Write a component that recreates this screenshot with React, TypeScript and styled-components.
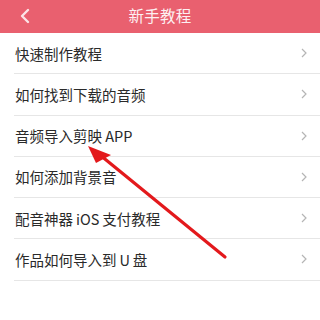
import React from "react";
import styled, { createGlobalStyle } from "styled-components";

const Global = createGlobalStyle`
  html, body { margin: 0; padding: 0; background: #ffffff; }
  body { font-family: "Noto Sans CJK SC", "Noto Sans", sans-serif; }
`;

const Page = styled.div`
  position: relative;
  width: 320px;
  height: 320px;
  overflow: hidden;
  background: #ffffff;
`;

const Header = styled.div`
  height: 33px;
  background: #e9606f;
  display: flex;
  align-items: center;
  justify-content: center;
  position: relative;
`;

const BackButton = styled.div`
  position: absolute;
  left: 18px;
  top: 8px;
  width: 14px;
  height: 16px;
  display: flex;
`;

const Title = styled.div`
  color: #fdf0f2;
  font-size: 15.5px;
  letter-spacing: 0.3px;
  line-height: 1;
  margin-top: -2px;
`;

const List = styled.div`
  display: flex;
  flex-direction: column;
`;

const Row = styled.div`
  height: 40.25px;
  margin-left: 14px;
  padding-right: 13px;
  border-bottom: 1px solid #e6e6e6;
  display: flex;
  align-items: center;
  justify-content: space-between;
`;

const Label = styled.span`
  font-size: 14.5px;
  color: #2a2a2a;
  padding-left: 1px;
  margin-top: 0px;
`;

const Chevron = styled.svg`
  width: 6px;
  height: 10px;
  flex: none;
`;

const ArrowLayer = styled.svg`
  position: absolute;
  left: 0;
  top: 0;
  width: 320px;
  height: 320px;
  pointer-events: none;
`;

const items = [
  "快速制作教程",
  "如何找到下载的音频",
  "音频导入剪映 APP",
  "如何添加背景音",
  "配音神器\u2009iOS\u2009支付教程",
  "作品如何导入到\u2009U\u2009盘",
];

export default function App() {
  return (
    <Page>
      <Global />
      <Header>
        <BackButton>
          <svg width="14" height="16" viewBox="0 0 14 16">
            <path d="M10 2 L4 8 L10 14" fill="none" stroke="#fbe4e7" strokeWidth="2.4" strokeLinecap="round" strokeLinejoin="round" />
          </svg>
        </BackButton>
        <Title>新手教程</Title>
      </Header>
      <List>
        {items.map((t) => (
          <Row key={t}>
            <Label>{t}</Label>
            <Chevron viewBox="0 0 6 10">
              <path d="M1 1 L5 5 L1 9" fill="none" stroke="#b5b5b5" strokeWidth="1.2" />
            </Chevron>
          </Row>
        ))}
      </List>
      <ArrowLayer viewBox="0 0 320 320">
        <line x1="225" y1="257" x2="100" y2="155" stroke="#e3191c" strokeWidth="3.2" strokeLinecap="round" />
        <polygon points="88,146 111,155 96,163" fill="#e3191c" />
      </ArrowLayer>
    </Page>
  );
}
